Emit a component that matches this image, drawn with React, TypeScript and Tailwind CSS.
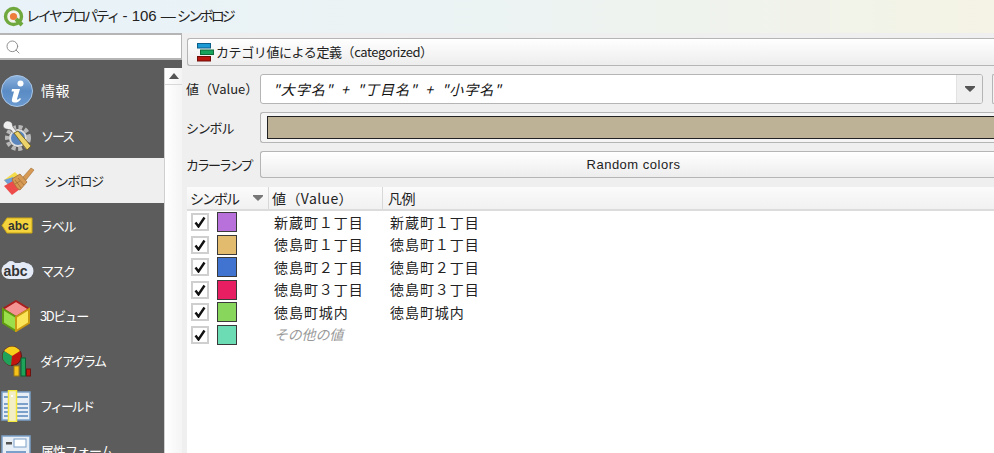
import React from 'react';
import { Search } from 'lucide-react';

const jp = "font-['Noto_Sans_CJK_JP','Noto_Sans',sans-serif]";

const QgisLogo = () => (
  <svg width="22" height="22" viewBox="0 0 22 22">
    <circle cx="10.5" cy="10.5" r="8" fill="#f3f3ee" stroke="#6fa83c" strokeWidth="3.4" />
    <circle cx="10.5" cy="10.5" r="3.6" fill="#ee7d3b" />
    <path d="M13 13l6 6" stroke="#6fa83c" strokeWidth="4" />
  </svg>
);

const InfoIcon = () => (
  <svg width="32" height="32" viewBox="0 0 32 32">
    <defs>
      <linearGradient id="infoFill" x1="0" y1="0" x2="0" y2="1">
        <stop offset="0" stopColor="#8db3de" />
        <stop offset="0.5" stopColor="#5a8bc4" />
        <stop offset="1" stopColor="#6b9ad0" />
      </linearGradient>
    </defs>
    <circle cx="16" cy="16" r="15.5" fill="url(#infoFill)" stroke="#a9c6e6" />
    <circle cx="19.500" cy="8.500" r="3" fill="#fff" />
    <path d="M11 14h8l-3 10c0 1 1 1 3-1l1 1c-2 3-4 3.500-6.500 3.500s-3-1.500-2.500-3.500l2-7.500h-2.500z" fill="#fff" />
  </svg>
);

const SourceIcon = () => (
  <svg width="32" height="32" viewBox="0 0 32 32">
    <circle cx="17" cy="18" r="11" fill="none" stroke="#b9b9b9" strokeWidth="4" strokeDasharray="4 2.500" />
    <circle cx="17" cy="18" r="8" fill="#5b86bd" stroke="#ddd" strokeWidth="2" />
    <path d="M4 2c-3 3-2 6 1 7l5 1 3 4 3-2-4-5-1-4C9 1 6 0 4 2z" fill="#eee" stroke="#555" strokeWidth="0.6" />
    <path d="M13 13l4-2 13 15-4 4z" fill="#ecd36a" stroke="#6b5a1e" strokeWidth="0.8" />
  </svg>
);

const BrushIcon = () => (
  <svg width="34" height="30" viewBox="0 0 34 30">
    <path d="M3 14l11-8 8 8-11 9z" fill="#f5dc4a" />
    <path d="M3 14l9-3 6 9-7 3z" fill="#6f9fd8" />
    <path d="M3 20l9-5 7 8-8 6z" fill="#ee4b4b" />
    <path d="M11 13l8-5 7 8-7 8c-3-1-6-6-8-11z" fill="#d79a55" stroke="#a36f33" strokeWidth="0.8" />
    <path d="M14 14l6 8M17 12l6 7M14 18l5-3" stroke="#a36f33" strokeWidth="0.8" />
    <path d="M22 11l8-9 3 2-8 10z" fill="#d79a55" stroke="#a36f33" strokeWidth="0.6" />
  </svg>
);

const LabelIcon = () => (
  <svg width="32" height="18" viewBox="0 0 32 18">
    <path d="M6 1h25v15H6L1 8.500z" fill="#f5d33c" stroke="#c9a514" />
    <text x="7" y="13" fontSize="12" fontWeight="700" fill="#333" fontFamily="Liberation Sans">abc</text>
  </svg>
);

const MaskIcon = () => (
  <svg width="33" height="20" viewBox="0 0 33 20">
    <rect x="0.500" y="2" width="32" height="16" rx="8" fill="#e4eaf6" />
    <circle cx="10" cy="5" r="5" fill="#e4eaf6" />
    <circle cx="22" cy="5" r="4" fill="#e4eaf6" />
    <text x="2.500" y="15" fontSize="14" fontWeight="700" fill="#333" fontFamily="Liberation Sans">abc</text>
  </svg>
);

const CubeIcon = () => (
  <svg width="30" height="32" viewBox="0 0 30 32">
    <path d="M15 1l13 8-13 8L2 9z" fill="#f59393" stroke="#a81e1e" strokeWidth="2" />
    <path d="M2 9l13 8v14L2 23z" fill="#9be04a" stroke="#5f9a12" strokeWidth="2" />
    <path d="M28 9l-13 8v14l13-8z" fill="#fbe65a" stroke="#c99a12" strokeWidth="2" />
  </svg>
);

const DiagramIcon = () => (
  <svg width="30" height="32" viewBox="0 0 30 32">
    <circle cx="11" cy="11" r="9.500" fill="#c3160f" stroke="#5b1a14" />
    <path d="M11 11L3 6a9.500 9.500 0 0 1 16 0z" fill="#f6d01a" />
    <path d="M11 11L3 6a9.500 9.500 0 0 0 7 14.500z" fill="#1fa35a" />
    <rect x="13" y="21" width="5" height="10" fill="#f6c21a" stroke="#9b7a10" />
    <rect x="20" y="13" width="4.500" height="18" fill="#1fa35a" stroke="#0d5f31" />
    <rect x="25.500" y="24" width="4" height="7" fill="#c3160f" stroke="#6b1410" />
  </svg>
);

const FieldIcon = () => (
  <svg width="30" height="32" viewBox="0 0 30 32">
    <rect x="1" y="2" width="28" height="28" fill="#e8eef6" stroke="#7ba0c9" strokeWidth="1.500" />
    <path d="M3 7h24M3 14h24M3 18h24M3 22h24M3 26h24" stroke="#7ba0c9" strokeWidth="2" />
    <rect x="7.500" y="0.500" width="8" height="31" fill="#f3eec4" stroke="#f4e83c" strokeWidth="1.500" />
    <rect x="10" y="5" width="2" height="2" fill="#fff" />
  </svg>
);

const FormIcon = () => (
  <svg width="30" height="32" viewBox="0 0 30 32">
    <rect x="1" y="1" width="28" height="30" fill="#e8eef6" stroke="#7ba0c9" strokeWidth="1.500" />
    <rect x="5" y="7" width="6" height="2.500" fill="#555" />
    <rect x="13" y="4" width="12" height="8" fill="#fff" stroke="#7ba0c9" />
    <path d="M5 17h20M5 22h20" stroke="#7ba0c9" strokeWidth="2" />
  </svg>
);

const navItems = [
  { label: '情報', icon: <InfoIcon />, active: false, left: 'w-[41px]', text: 'text-[14px] tracking-[0.5px]' },
  { label: 'ソース', icon: <SourceIcon />, active: false, left: 'w-[41px]', text: 'text-[13px] tracking-[-2px]' },
  { label: 'シンボロジ', icon: <BrushIcon />, active: true, left: 'w-[44px]', text: 'text-[13px] tracking-[-1.2px]' },
  { label: 'ラベル', icon: <LabelIcon />, active: false, left: 'w-[40px]', text: 'text-[13px] tracking-[-1.2px]' },
  { label: 'マスク', icon: <MaskIcon />, active: false, left: 'w-[41px]', text: 'text-[13px] tracking-[-2px]' },
  { label: '3Dビュー', icon: <CubeIcon />, active: false, left: 'w-[40px]', text: 'text-[13px] tracking-[-1.5px]' },
  { label: 'ダイアグラム', icon: <DiagramIcon />, active: false, left: 'w-[40px]', text: 'text-[13px] tracking-[-2px]' },
  { label: 'フィールド', icon: <FieldIcon />, active: false, left: 'w-[40px]', text: 'text-[13px] tracking-[-2.4px]' },
  { label: '属性フォーム', icon: <FormIcon />, active: false, left: 'w-[41px]', text: 'text-[13px] tracking-[-1px]' },
];

const categories = [
  { value: '新蔵町１丁目', legend: '新蔵町１丁目', swatch: 'bg-[#b871da]' },
  { value: '徳島町１丁目', legend: '徳島町１丁目', swatch: 'bg-[#e3bb6e]' },
  { value: '徳島町２丁目', legend: '徳島町２丁目', swatch: 'bg-[#4174d0]' },
  { value: '徳島町３丁目', legend: '徳島町３丁目', swatch: 'bg-[#e81e63]' },
  { value: '徳島町城内', legend: '徳島町城内', swatch: 'bg-[#88d65c]' },
  { value: 'その他の値', legend: '', swatch: 'bg-[#6bdcb4]', muted: true },
];

const Caret = ({ className }: { className: string }) => (
  <svg width="10" height="6" viewBox="0 0 12 7" className={className}>
    <path d="M0 0h12v1.500L6 7 0 1.500z" fill="currentColor" />
  </svg>
);

const Label = ({ children, className }: { children: React.ReactNode; className: string }) => (
  <div className={`w-[74px] -ml-px shrink-0 text-[13px] whitespace-nowrap text-[#222] ${className}`}>{children}</div>
);

export default function App() {
  return (
    <div className={`${jp} w-[994px] h-[453px] overflow-hidden bg-[#efefef] flex flex-col`}>
      {/* title bar */}
      <div className="h-[33px] shrink-0 flex items-center pl-[3px] gap-[3px] bg-gradient-to-r from-[#e8f2f8] via-[#ecf3f3] to-[#f4f3e5]">
        <QgisLogo />
        <span className="text-[14px] text-[#222] whitespace-nowrap -ml-[2px]">
          <span className="tracking-[-2.3px]">レイヤプロパティ</span>
          <span className="font-['Liberation_Sans',sans-serif] text-[15px] whitespace-pre"> - 106 — </span>
          <span className="inline-block -ml-[3px] tracking-[-2.8px]">シンボロジ</span>
        </span>
      </div>

      <div className="flex flex-1 min-h-0">
        {/* left column */}
        <div className="w-[182px] shrink-0 bg-[#5c5c5c] flex flex-col">
          <div className="h-[27px] shrink-0 bg-white border-y-2 border-[#b5b5b5] border-r flex items-center pl-[5px]">
            <Search size={16} strokeWidth={1.4} className="text-[#888]" />
          </div>
          <div className="flex flex-1 min-h-0 mt-2">
            <div className="w-[164px] shrink-0">
              {navItems.map(item => (
                <div
                  key={item.label}
                  className={`h-[45px] flex items-center ${item.active ? 'bg-[#efefef] text-[#222]' : 'text-white'}`}
                >
                  <div className={`${item.left} shrink-0 flex items-center pl-px`}>{item.icon}</div>
                  <span className={`${item.text} whitespace-nowrap`}>{item.label}</span>
                </div>
              ))}
            </div>
            <div className="w-[18px] bg-gradient-to-r from-white to-[#f4f4f4] border-l border-[#cfcfcf]">
              <div className="h-[17px] border-b border-[#d8d8d8] flex items-center justify-center">
                <svg width="10" height="6" viewBox="0 0 10 6"><path d="M5 0l5 6H0z" fill="#555" /></svg>
              </div>
            </div>
          </div>
        </div>

        {/* main panel */}
        <div className="flex-1 min-w-0 pt-[5px] pl-[5px]">
          <div className="h-[28px] w-[830px] flex items-center pl-[9px] gap-[2px] rounded-l-[3px] border border-r-0 border-[#b5b5b5] bg-gradient-to-b from-white to-[#ededed]">
            <svg width="17" height="19" viewBox="0 0 17 19">
              <rect x="0.500" y="0.500" width="13" height="4.500" fill="#1b9ad6" stroke="#0b5f8a" />
              <rect x="3.500" y="7" width="13" height="4.500" fill="#17a35c" stroke="#0d6b3a" />
              <rect x="0.500" y="13.500" width="13" height="4.500" fill="#b8150f" stroke="#700d09" />
            </svg>
            <span className="text-[13px] tracking-[-0.4px] text-[#222] whitespace-nowrap">カテゴリ値による定義（categorized）</span>
          </div>

          <div className="mt-2 flex items-center h-[30px]">
            <Label className="">値（Value）</Label>
            <div className="h-[30px] w-[723px] shrink-0 rounded-[3px] border border-[#b5b5b5] bg-white flex overflow-hidden">
              <div className="flex-1 flex items-center pl-[12px] italic text-[14px] tracking-[1px] [word-spacing:3.5px] text-[#111] whitespace-pre">"大字名" + "丁目名" + "小字名"</div>
              <div className="w-[26px] bg-[#efefef] border-l border-[#e2e2e2] flex items-center justify-center text-[#555]">
                <Caret className="" />
              </div>
            </div>
            <div className="ml-[9px] h-[30px] flex-1 rounded-l-[3px] border border-r-0 border-[#b5b5b5] bg-[#f3f3f3]" />
          </div>

          <div className="mt-[8px] flex items-center h-[31px]">
            <Label className="tracking-[-1.2px]">シンボル</Label>
            <div className="h-[31px] flex-1 rounded-l-[3px] border border-r-0 border-[#b5b5b5] bg-[#f5f5f5] py-[3px] pl-[6px]">
              <div className="h-full bg-[#bdb296] border border-r-0 border-[#222]" />
            </div>
          </div>

          <div className="mt-[8px] flex items-center h-[27px]">
            <Label className="tracking-[-2px]">カラーランプ</Label>
            <div className="h-[27px] w-[760px] rounded-l-[3px] border border-r-0 border-[#b5b5b5] bg-gradient-to-b from-white to-[#ededed] flex items-center justify-center">
              <span className="font-['Liberation_Sans',sans-serif] text-[13px] tracking-[0.5px] text-[#222] ml-[12px]">Random colors</span>
            </div>
          </div>

          {/* category table */}
          <div className="mt-[9px] bg-white h-[266px] w-[807px] overflow-hidden">
            <div className="h-[24px] flex border-b-2 border-[#dcdcdc] bg-gradient-to-b from-[#fbfbfb] to-[#f1f1f1] text-[14px] text-[#222]">
              <div className="w-[82px] shrink-0 flex items-center justify-between pl-[3px] pr-[5px] border-r border-[#d8d8d8]">
                <span className="tracking-[-2px]">シンボル</span>
                <Caret className="text-[#777]" />
              </div>
              <div className="w-[114px] shrink-0 pl-[3px] flex items-center border-r border-[#d8d8d8] tracking-[0.4px]">値（Value）</div>
              <div className="pl-[5px] flex items-center tracking-[-0.4px]">凡例</div>
            </div>
            <div>
              {categories.map(cat => (
                <div key={cat.value} className="h-[22.5px] flex items-center pl-[4px] text-[14px] tracking-[0.95px] text-[#222]">
                  <div className="w-[18px] h-[18px] shrink-0 border-2 border-[#cfcfcf] bg-white flex items-center justify-center">
                    <svg width="12" height="12" viewBox="0 0 12 12"><path d="M1.500 6.500l3 4L10.500 1.500" fill="none" stroke="#111" strokeWidth="2.400" /></svg>
                  </div>
                  <div className={`ml-[8px] w-[20px] h-[20px] shrink-0 border border-[#3a3a3a] ${cat.swatch}`} />
                  <div className={`ml-[37px] w-[116px] shrink-0 whitespace-nowrap ${cat.muted ? 'italic text-[#999] tracking-[-0.2px]' : ''}`}>{cat.value}</div>
                  <div className="whitespace-nowrap">{cat.legend}</div>
                </div>
              ))}
            </div>
          </div>
        </div>
      </div>
    </div>
  );
}
